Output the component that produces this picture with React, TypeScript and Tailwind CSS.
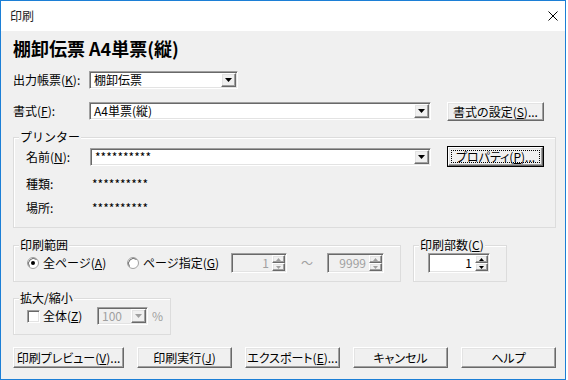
import React from 'react';

// classic 3D edges
const sunken =
  'border border-t-[#a0a0a0] border-l-[#a0a0a0] border-r-white border-b-white shadow-[inset_1px_1px_0_#696969,inset_-1px_-1px_0_#e3e3e3]';
const raised =
  'border border-t-white border-l-white border-r-[#696969] border-b-[#696969] shadow-[inset_-1px_-1px_0_#a0a0a0,inset_1px_1px_0_#e3e3e3]';

function Arrow({ dir, color, w = 7, h = 4 }: { dir: 'up' | 'down'; color: string; w?: number; h?: number }) {
  const d = dir === 'down' ? `M0 0H${w}L${w / 2} ${h}Z` : `M${w / 2} 0L${w} ${h}H0Z`;
  return (
    <svg width={w} height={h} viewBox={`0 0 ${w} ${h}`}>
      <path d={d} fill={color} />
    </svg>
  );
}

function Combo({ value, className, disabled }: { value: string; className: string; disabled?: boolean }) {
  return (
    <div className={`h-[18px] flex items-stretch p-[1px] ${sunken} ${disabled ? 'bg-[#f0f0f0] text-[#a0a0a0]' : 'bg-white'} ${className}`}>
      <span className="flex-1 pl-[3px] leading-[14px] whitespace-nowrap">{value}</span>
      <div className={`w-[15px] flex items-center justify-center bg-[#f0f0f0] ${raised}`}>
        <Arrow dir="down" color={disabled ? '#a0a0a0' : '#000'} />
      </div>
    </div>
  );
}

function Spin({ value, className, disabled }: { value: string; className: string; disabled?: boolean }) {
  const c = disabled ? '#a0a0a0' : '#000';
  return (
    <div className={`h-[20px] flex items-stretch p-[1px] ${sunken} ${disabled ? 'bg-[#f0f0f0] text-[#a0a0a0]' : 'bg-white'} ${className}`}>
      <span className="flex-1 text-right pr-[3px] leading-[16px]">{value}</span>
      <div className="w-[13px] flex flex-col">
        <div className={`flex-1 flex items-center justify-center bg-[#f0f0f0] ${raised}`}>
          <Arrow dir="up" color={c} w={5} h={3} />
        </div>
        <div className={`flex-1 flex items-center justify-center bg-[#f0f0f0] ${raised}`}>
          <Arrow dir="down" color={c} w={5} h={3} />
        </div>
      </div>
    </div>
  );
}

function Btn({ children, className, isDefault }: { children: React.ReactNode; className: string; isDefault?: boolean }) {
  if (isDefault) {
    return (
      <div className={`border border-black flex ${className}`}>
        <div className={`flex-1 flex items-center justify-center p-[2px] bg-[#f0f0f0] ${raised}`}>
          <div className="w-full h-full flex items-center justify-center border border-dotted border-black leading-[14px] whitespace-nowrap [font-feature-settings:'palt']">
            {children}
          </div>
        </div>
      </div>
    );
  }
  return (
    <div className={`flex items-center justify-center bg-[#f0f0f0] leading-[16px] whitespace-nowrap [font-feature-settings:'palt'] ${raised} ${className}`}>
      {children}
    </div>
  );
}

function Radio({ checked }: { checked?: boolean }) {
  return (
    <svg width="12" height="12" viewBox="0 0 12 12" className="shrink-0">
      <circle cx="6" cy="6" r="5.5" fill="#fff" stroke="#a0a0a0" />
      <path d="M2.5 9.5A5 5 0 0 1 9.5 2.5" fill="none" stroke="#696969" />
      {checked && <circle cx="6" cy="6" r="2" fill="#000" />}
    </svg>
  );
}

function Group({ label, className, children }: { label: React.ReactNode; className: string; children: React.ReactNode }) {
  return (
    <div className={`relative border border-[#dcdcdc] shadow-[inset_1px_1px_0_#fff] ${className}`}>
      <span className="absolute left-[5px] top-[-9px] px-[1px] bg-[#f0f0f0] leading-[16px] whitespace-nowrap">{label}</span>
      {children}
    </div>
  );
}

export default function App() {
  return (
    <div className="w-[568px] h-[380px] bg-white font-['Noto_Sans_CJK_JP',sans-serif] text-[12px] text-black">
      <div className="w-[566px] h-[380px] border border-[#1c7fd6] flex flex-col">
        <div className="h-[30px] shrink-0 bg-white flex items-center justify-between pl-[9px] pr-[7px]">
          <span className="leading-[16px] text-[#222]">印刷</span>
          <svg width="10" height="10" viewBox="0 0 10 10">
            <path d="M0.5 0.5L9.5 9.5M9.5 0.5L0.5 9.5" stroke="#000" strokeWidth="1" />
          </svg>
        </div>

        <div className="flex-1 bg-[#f0f0f0] flex flex-col pl-[12px]">
          <div className="mt-[6px] h-[22px] text-[18px] font-bold leading-[22px]">棚卸伝票 A4単票(縦)</div>

          <div className="mt-[12px] h-[18px] flex items-center">
            <span className="w-[76px] leading-[16px]">出力帳票(<u>K</u>):</span>
            <Combo value="棚卸伝票" className="w-[149px]" />
          </div>

          <div className="mt-[13px] h-[19px] flex items-start">
            <span className="w-[76px] leading-[18px]">書式(<u>F</u>):</span>
            <Combo value="A4単票(縦)" className="w-[342px]" />
            <Btn className="ml-[16px] w-[97px] h-[19px]">書式の設定(<u>S</u>)...</Btn>
          </div>

          <Group label="プリンター" className="mt-[16px] w-[543px] h-[91px] pt-[8px] pl-[12px]">
            <div className="h-[21px] flex items-center">
              <span className="w-[64px] leading-[16px]">名前(<u>N</u>):</span>
              <Combo value="**********" className="w-[341px]" />
              <Btn isDefault className="ml-[16px] w-[97px] h-[21px]">プロパティ(<u>P</u>)...</Btn>
            </div>
            <div className="mt-[9px] h-[16px] flex items-center">
              <span className="w-[66px] leading-[16px]">種類:</span>
              <span className="leading-[16px]">**********</span>
            </div>
            <div className="mt-[8px] h-[16px] flex items-center">
              <span className="w-[66px] leading-[16px]">場所:</span>
              <span className="leading-[16px]">**********</span>
            </div>
          </Group>

          <div className="mt-[17px] flex items-start">
            <Group label="印刷範囲" className="w-[388px] h-[37px] pt-[7px] pl-[13px]">
              <div className="h-[20px] flex items-center">
                <div className="w-[100px] flex items-center">
                  <Radio checked />
                  <span className="ml-[4px] leading-[16px]">全ページ(<u>A</u>)</span>
                </div>
                <div className="w-[104px] flex items-center">
                  <Radio />
                  <span className="ml-[4px] leading-[16px]">ページ指定(<u>G</u>)</span>
                </div>
                <Spin value="1" disabled className="w-[56px]" />
                <span className="w-[40px] text-center text-[#a0a0a0] leading-[16px]">～</span>
                <Spin value="9999" disabled className="w-[57px]" />
              </div>
            </Group>
            <Group label={<>印刷部数(<u>C</u>)</>} className="ml-[12px] w-[94px] h-[37px] pt-[7px] pl-[14px]">
              <Spin value="1" className="w-[62px]" />
            </Group>
          </div>

          <Group label="拡大/縮小" className="mt-[16px] w-[158px] h-[37px] pt-[8px] pl-[13px]">
            <div className="h-[18px] flex items-center">
              <div className={`w-[13px] h-[13px] bg-white ${sunken}`} />
              <span className="ml-[3px] w-[54px] leading-[16px]">全体(<u>Z</u>)</span>
              <Combo value="100" disabled className="w-[51px] h-[17px]" />
              <span className="ml-[4px] text-[#a0a0a0] leading-[16px]">%</span>
            </div>
          </Group>

          <div className="mt-[12px] flex gap-[13px]">
            <Btn className="w-[111px] h-[21px]">印刷プレビュー(<u>V</u>)...</Btn>
            <Btn className="w-[95px] h-[21px]">印刷実行(<u>J</u>)</Btn>
            <Btn className="w-[95px] h-[21px]">エクスポート(<u>E</u>)...</Btn>
            <Btn className="w-[95px] h-[21px]">キャンセル</Btn>
            <Btn className="w-[95px] h-[21px]">ヘルプ</Btn>
          </div>
        </div>
      </div>
    </div>
  );
}
